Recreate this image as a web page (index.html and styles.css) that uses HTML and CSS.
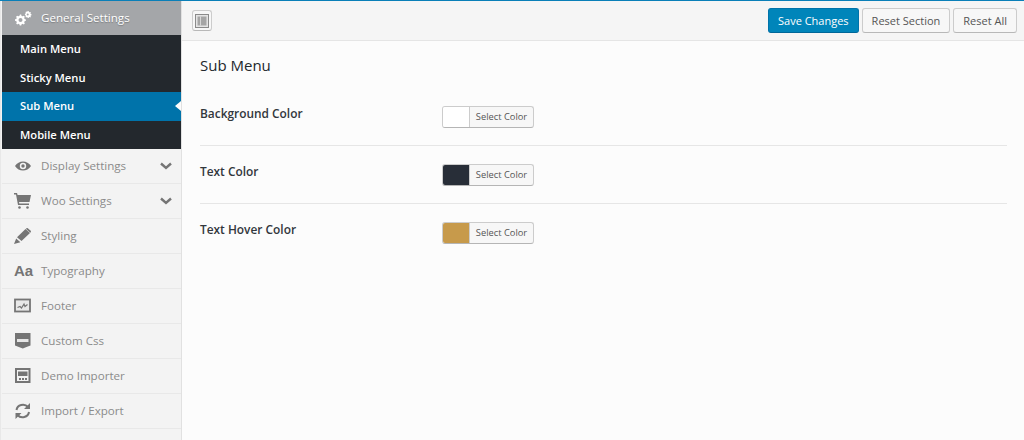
FILE: index.html
```html
<!DOCTYPE html>
<html lang="en">
<head>
<meta charset="utf-8">
<title>Sub Menu</title>
<link rel="stylesheet" href="styles.css">
</head>
<body>
<div class="app">
  <aside class="sidebar">
    <div class="group-head">
      <svg class="ico" viewBox="0 0 18 16"><path fill="#fff" d="M6 4.500l1.200.1.400 1.300 1 .4 1.200-.6 1 1-.6 1.200.4 1 1.300.5v1.400l-1.300.4-.4 1 .6 1.200-1 1-1.200-.6-1 .4-.4 1.300H5.800l-.4-1.300-1-.4-1.200.6-1-1 .6-1.200-.4-1L1 10.700V9.300l1.300-.4.400-1-.6-1.200 1-1 1.200.6 1-.4zM6.500 8a2 2 0 1 0 0 4 2 2 0 0 0 0-4zM14 1l.7.100.2.800.6.300.8-.3.600.7-.4.700.2.600.8.300v1l-.8.200-.2.600.4.700-.6.700-.8-.4-.6.300-.2.800h-1l-.2-.8-.6-.3-.8.400-.6-.7.400-.7-.2-.6-.8-.3V3.700l.8-.2.200-.6-.4-.7.600-.7.800.3.600-.3.200-.8zm-.3 2.500a1 1 0 1 0 0 2 1 1 0 0 0 0-2z"/></svg>
      <span>General Settings</span>
    </div>
    <ul class="submenu">
      <li>Main Menu</li>
      <li>Sticky Menu</li>
      <li class="current">Sub Menu</li>
      <li>Mobile Menu</li>
    </ul>
    <ul class="menu">
      <li>
        <svg class="ico" viewBox="0 0 18 16"><path fill="#757575" fill-rule="evenodd" d="M1 8c2-3 4.800-4.500 8-4.500S15 5 17 8c-2 3-4.800 4.500-8 4.500S3 11 1 8zm8-3.200a3.200 3.200 0 1 0 0 6.400 3.200 3.200 0 0 0 0-6.400zM9 6.300a1.700 1.700 0 1 1 0 3.400 1.700 1.700 0 0 1 0-3.400z"/></svg>
        <span>Display Settings</span>
        <svg class="chev" viewBox="0 0 12 8"><path fill="none" stroke="#757575" stroke-width="2.400" d="M1 1.500l5 4.500 5-4.500"/></svg>
      </li>
      <li>
        <svg class="ico" viewBox="0 0 18 16"><path fill="#757575" d="M0 0h3l.6 2H17l-1.500 7H5l.3 1.500H15V12H4L2 1.500H0z"/><circle cx="5.500" cy="14.500" r="1.300" fill="#757575"/><circle cx="13.500" cy="14.500" r="1.300" fill="#757575"/></svg>
        <span>Woo Settings</span>
        <svg class="chev" viewBox="0 0 12 8"><path fill="none" stroke="#757575" stroke-width="2.400" d="M1 1.500l5 4.500 5-4.500"/></svg>
      </li>
      <li>
        <svg class="ico" viewBox="0 0 18 16"><path fill="#757575" d="M11.500 1l4.500 4-8.500 8L3 9.300zM2.200 10.500l4.200 3.700L0 16z"/><path fill="#757575" d="M12.500.2l1-.2 3.500 3-.2 1-.5.800-4.500-4z"/></svg>
        <span>Styling</span>
      </li>
      <li>
        <b class="ico aa">Aa</b>
        <span>Typography</span>
      </li>
      <li>
        <svg class="ico" viewBox="0 0 18 16"><rect x="1" y="1.500" width="15" height="12" fill="#e9e9e9" stroke="#757575" stroke-width="1.800"/><path fill="none" stroke="#757575" stroke-width="1.200" d="M3.500 9.500l2.500-1 1.500 1.500 2.500-4 1 2.500 2.500-2"/></svg>
        <span>Footer</span>
      </li>
      <li>
        <svg class="ico" viewBox="0 0 18 16"><path fill="#757575" d="M1 0h15.500v12.500l-4 1.500-3.700 1.500-4-1.500-3.800-1.500z"/><rect x="3" y="6" width="11.500" height="3" fill="#e6e6e6"/></svg>
        <span>Custom Css</span>
      </li>
      <li>
        <svg class="ico" viewBox="0 0 18 16"><path fill="#757575" fill-rule="evenodd" d="M1 0h15.500v15H1zM3 2v11h11.500V2z"/><path fill="#757575" d="M4 3.500h9.500V8H4zM5 10h2v2H5zm3 0h2v2H8zm3 0h2v2h-2z"/></svg>
        <span>Demo Importer</span>
      </li>
      <li>
        <svg class="ico" viewBox="0 0 18 16"><path fill="none" stroke="#757575" stroke-width="2" d="M2.500 7a6.500 6 0 0 1 11.500-3M15 9a6.500 6 0 0 1-11.500 3"/><path fill="#757575" d="M16 0v6h-6zM1.500 16v-6h6z"/></svg>
        <span>Import / Export</span>
      </li>
    </ul>
  </aside>
  <main class="main">
    <header class="toolbar">
      <button class="btn btn-icon" aria-label="Toggle layout">
        <svg viewBox="0 0 14 14" width="14" height="14"><rect x=".5" y=".5" width="13" height="13" fill="#e4e4e4" stroke="#8a8a8a"/><rect x="2.500" y="2.500" width="9" height="9" fill="#a5a5a5"/><rect x="5" y="2.500" width=".8" height="9" fill="#e4e4e4"/></svg>
      </button>
      <div class="actions">
        <button class="btn btn-primary">Save Changes</button>
        <button class="btn">Reset Section</button>
        <button class="btn">Reset All</button>
      </div>
    </header>
    <section class="content">
      <h2>Sub Menu</h2>
      <div class="row">
        <label>Background Color</label>
        <div class="picker"><i class="swatch sw-white"></i><span>Select Color</span></div>
      </div>
      <div class="row">
        <label>Text Color</label>
        <div class="picker"><i class="swatch sw-dark"></i><span>Select Color</span></div>
      </div>
      <div class="row">
        <label>Text Hover Color</label>
        <div class="picker"><i class="swatch sw-gold"></i><span>Select Color</span></div>
      </div>
    </section>
  </main>
</div>
</body>
</html>
```
FILE: styles.css
```css
* { box-sizing: border-box; }
html, body { margin: 0; height: 100%; overflow: hidden; }
body {
  font-family: "Open Sans", "Liberation Sans", sans-serif;
  background: #fcfcfc;
  color: #23282d;
}
.app {
  display: flex;
  height: 440px;
  border-top: 1px solid #0a7fb8;
}
.sidebar {
  flex: 0 0 182px;
  padding-left: 1px;
  background: #f3f3f3;
  border-right: 1px solid #e1e1e1;
  border-left: 1px solid #e8e8e8;
}
.group-head {
  display: flex;
  align-items: center;
  height: 34px;
  padding-left: 12px;
  padding-bottom: 1px;
  background: #a4a6a9;
  color: #fff;
  font-size: 11.600px;
  font-weight: 400;
  text-shadow: 0 1px 1px rgba(0, 0, 0, .25);
}
.ico {
  flex: 0 0 18px;
  width: 18px;
  height: 16px;
  margin-right: 9px;
}
.submenu, .menu { list-style: none; margin: 0; padding: 0; }
.submenu { background: #23282d; }
.submenu li {
  position: relative;
  height: 28.5px;
  line-height: 28px;
  padding-left: 18px;
  color: #fff;
  font-size: 11.200px;
  font-weight: 600;
}
.submenu li.current { background: #0073aa; }
.submenu li.current::after {
  content: "";
  position: absolute;
  right: 0;
  top: 9px;
  border: 5.500px solid transparent;
  border-left-width: 0;
  border-right: 6px solid #fcfcfc;
}
.menu li {
  display: flex;
  align-items: center;
  height: 35px;
  padding: 0 9px 1px 12px;
  border-bottom: 1px solid #e8e8e8;
  color: #8b8b8b;
  font-size: 11.600px;
  font-weight: 400;
}
.menu li span { flex: 1; }
.aa {
  font-family: "Liberation Sans", sans-serif;
  font-size: 15px;
  line-height: 16px;
  color: #757575;
  font-weight: 700;
}
.chev { width: 12px; height: 8px; }
.main { flex: 1; min-width: 0; }
.toolbar {
  display: flex;
  align-items: center;
  justify-content: space-between;
  height: 40px;
  padding: 0 7px 0 10px;
  background: #f5f5f5;
  border-bottom: 1px solid #e5e5e5;
}
.actions { display: flex; gap: 3px; }
.btn {
  height: 25px;
  padding: 0 9px;
  border: 1px solid #cccccc;
  border-bottom-color: #b8b8b8;
  border-radius: 3px;
  background: #f7f7f7;
  color: #555;
  font-family: inherit;
  font-size: 11px;
}
.btn-icon {
  display: flex;
  align-items: center;
  justify-content: center;
  width: 20px;
  height: 21px;
  padding: 0;
}
.btn-primary {
  background: #0085ba;
  border-color: #0073aa;
  border-bottom-color: #006799;
  color: #fff;
}
.content { padding: 0 17px 0 18px; }
h2 {
  margin: 0;
  padding: 14px 0 0;
  height: 47px;
  font-size: 15px;
  line-height: 20px;
  font-weight: 500;
  color: #23282d;
}
.row {
  display: flex;
  align-items: flex-start;
  height: 58px;
  padding-top: 18px;
  border-bottom: 1px solid #e6e6e6;
}
.row:last-child { border-bottom: 0; }
label {
  flex: 0 0 242px;
  font-size: 11.900px;
  font-weight: 600;
  line-height: 15px;
  color: #32373c;
}
.picker {
  display: flex;
  width: 92px;
  height: 22px;
  border: 1px solid #cccccc;
  border-bottom-color: #b5b5b5;
  border-radius: 3px;
  background: #f7f7f7;
  overflow: hidden;
  font-size: 9.300px;
  line-height: 20px;
  color: #555;
}
.picker span { flex: 1; text-align: center; }
.swatch { flex: 0 0 27px; border-right: 1px solid #ccc; }
.sw-white { background: #fff; }
.sw-dark { background: #282e38; }
.sw-gold { background: #c79a4b; }
```
